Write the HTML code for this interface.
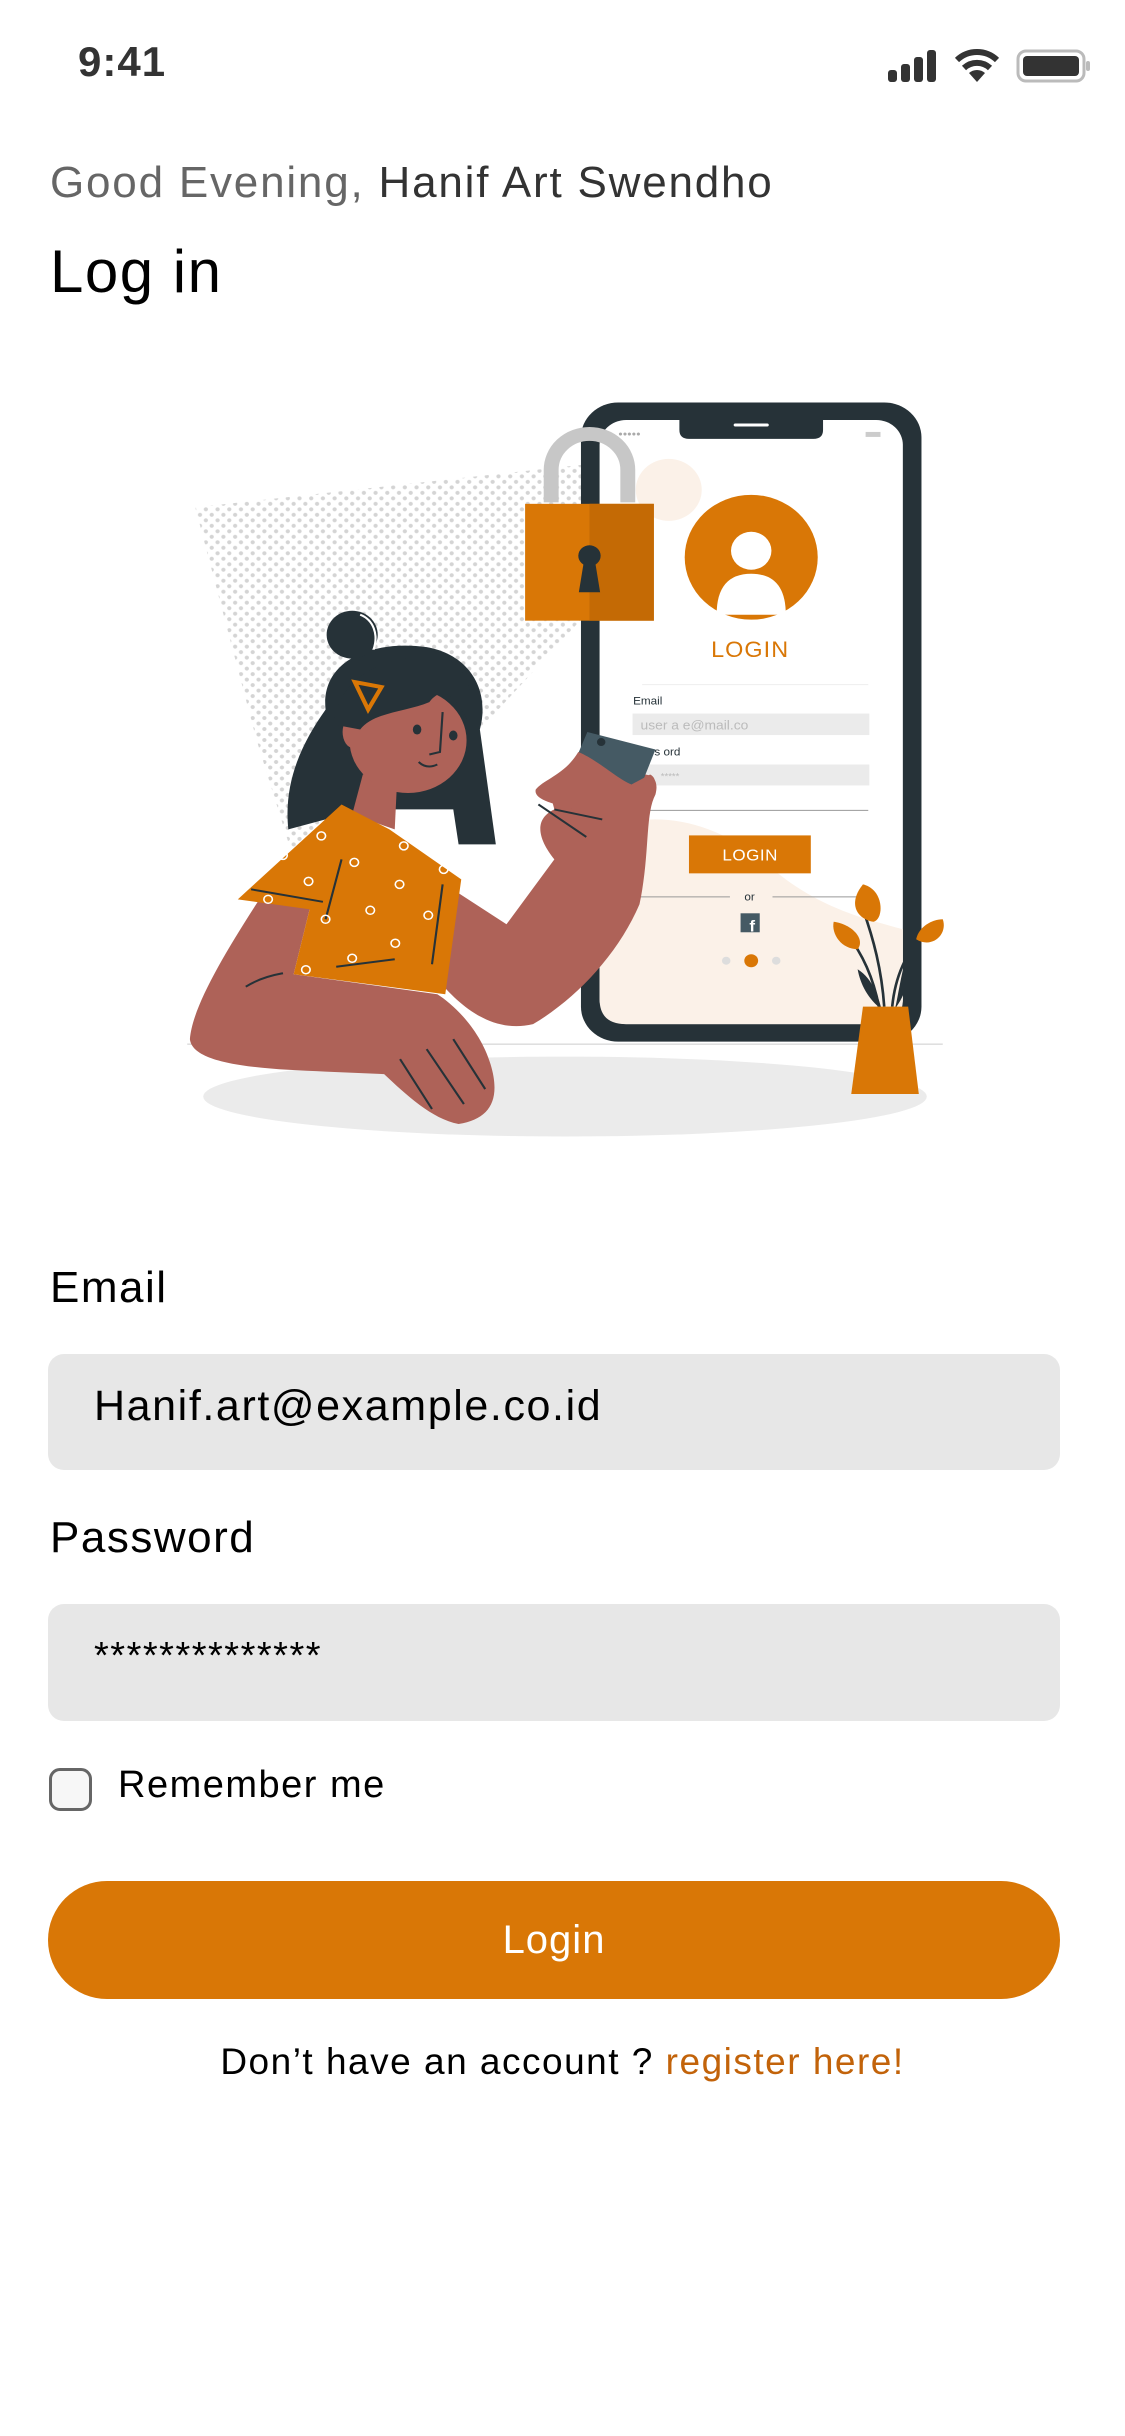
<!DOCTYPE html>
<html><head><meta charset="utf-8">
<style>
*{margin:0;padding:0;box-sizing:border-box}
body{width:1125px;height:2436px;background:#fff;position:relative;overflow:hidden;font-family:"Liberation Sans",sans-serif;color:#000}
.a{position:absolute;white-space:nowrap}
.inp{position:absolute;left:48px;width:1012px;background:#e7e7e7;border-radius:16px}
</style></head><body>
<div class="a" style="left:78px;top:38px;font-size:42px;font-weight:bold;color:#333;letter-spacing:1px">9:41</div>
<svg class="a" style="left:885px;top:48px" width="205" height="36" viewBox="0 0 205 36">
<rect x="3" y="22" width="9" height="12" rx="3" fill="#333"/><rect x="16" y="16" width="9" height="18" rx="3" fill="#333"/><rect x="29" y="9" width="9" height="25" rx="3" fill="#333"/><rect x="42" y="2" width="9" height="32" rx="3" fill="#333"/>
<path d="M92 34 L84 25 A12 12 0 0 1 100 25 Z" fill="#333"/>
<path d="M79 20 A19 19 0 0 1 105 20" stroke="#333" stroke-width="6" fill="none"/>
<path d="M72 12 A29 29 0 0 1 112 12" stroke="#333" stroke-width="6" fill="none"/>
<rect x="133" y="3" width="66" height="30" rx="8" fill="none" stroke="#bbb" stroke-width="3"/>
<rect x="138" y="8" width="56" height="20" rx="4" fill="#333"/>
<rect x="201" y="13" width="4" height="10" rx="2" fill="#bbb"/>
</svg>
<div class="a" style="left:50px;top:158px;font-size:44px;color:#666;letter-spacing:1.8px">Good Evening, <span style="color:#333">Hanif Art Swendho</span></div>
<div class="a" style="left:50px;top:237px;font-size:60px;color:#000;letter-spacing:1.5px">Log in</div>

<svg class="a" style="left:150px;top:380px" width="830" height="759" viewBox="0 0 1560 1520" preserveAspectRatio="none">
<defs><pattern id="dots" width="22" height="22" patternUnits="userSpaceOnUse"><circle cx="6" cy="6" r="4" fill="#d4d4d4"/><circle cx="17" cy="17" r="4" fill="#d4d4d4"/></pattern></defs>
<polygon points="85,255 810,170 810,480 620,700 270,960 200,720" fill="url(#dots)"/>
<ellipse cx="780" cy="1435" rx="680" ry="80" fill="#ebebeb"/>
<line x1="70" y1="1330" x2="1490" y2="1330" stroke="#ccc" stroke-width="2"/>
<rect x="810" y="45" width="640" height="1280" rx="70" fill="#263238"/>
<rect x="845" y="80" width="570" height="1210" rx="50" fill="#fff"/>
<path d="M845,900 C950,860 1050,880 1150,960 C1250,1060 1350,1080 1415,1100 L1415,1240 Q1415,1290 1365,1290 L895,1290 Q845,1290 845,1240 Z" fill="#fbf1e8"/>
<circle cx="975" cy="220" r="62" fill="#fbf1e8"/>
<path d="M995,75 H1265 V100 Q1265,118 1247,118 H1013 Q995,118 995,100 Z" fill="#263238"/>
<rect x="1097" y="87" width="66" height="6" rx="3" fill="#fff"/>
<text x="880" y="112" font-size="14" fill="#aaa">●●●●●</text>
<rect x="1345" y="104" width="28" height="10" fill="#ccc"/>
<circle cx="1130" cy="355" r="125" fill="#d97706"/>
<circle cx="1130" cy="342" r="38" fill="#fff"/>
<path d="M1065,470 Q1065,388 1130,388 Q1195,388 1195,470 Z" fill="#fff"/>
<text x="1128" y="555" font-size="44" fill="#d97706" text-anchor="middle" letter-spacing="2">LOGIN</text>
<line x1="925" y1="610" x2="1350" y2="610" stroke="#eee" stroke-width="2"/>
<text x="908" y="650" font-size="22" fill="#263238">Email</text>
<rect x="907" y="668" width="445" height="43" fill="#ebebeb"/>
<text x="922" y="700" font-size="26" fill="#bbb">user  a    e@mail.co</text>
<text x="948" y="752" font-size="22" fill="#263238">s  ord</text>
<rect x="907" y="770" width="445" height="42" fill="#ebebeb"/>
<text x="960" y="800" font-size="18" fill="#bbb">*****</text>
<line x1="925" y1="862" x2="1350" y2="862" stroke="#999" stroke-width="2"/>
<rect x="1013" y="912" width="229" height="76" fill="#d97706"/>
<text x="1128" y="962" font-size="32" fill="#fff" text-anchor="middle" letter-spacing="1">LOGIN</text>
<line x1="920" y1="1035" x2="1090" y2="1035" stroke="#999" stroke-width="2"/>
<line x1="1170" y1="1035" x2="1330" y2="1035" stroke="#999" stroke-width="2"/>
<text x="1127" y="1042" font-size="22" fill="#263238" text-anchor="middle">or</text>
<rect x="1110" y="1068" width="36" height="38" fill="#455a64"/>
<text x="1132" y="1104" font-size="32" font-weight="bold" fill="#fff" text-anchor="middle">f</text>
<circle cx="1083" cy="1163" r="8" fill="#ddd"/><circle cx="1130" cy="1163" r="13" fill="#d97706"/><circle cx="1177" cy="1163" r="8" fill="#ddd"/>
<path d="M754,245 V180 A72,72 0 0 1 898,180 V245" stroke="#c7c7c7" stroke-width="28" fill="none"/>
<rect x="705" y="248" width="242" height="234" fill="#d97706"/>
<rect x="826" y="248" width="121" height="234" fill="#c46a05"/>
<circle cx="826" cy="352" r="21" fill="#263238"/>
<polygon points="816,360 836,360 846,425 806,425" fill="#263238"/>
<path d="M1380,1255 C1375,1180 1360,1120 1340,1060" stroke="#263238" stroke-width="5" fill="none"/>
<path d="M1395,1255 C1400,1200 1420,1140 1460,1110" stroke="#263238" stroke-width="5" fill="none"/>
<path d="M1370,1255 C1360,1200 1340,1150 1310,1110" stroke="#263238" stroke-width="5" fill="none"/>
<path d="M1330,1180 C1360,1200 1370,1240 1375,1260 C1350,1240 1335,1210 1330,1180Z" fill="#263238"/>
<path d="M1420,1160 C1410,1200 1405,1240 1400,1260 C1420,1230 1430,1200 1420,1160Z" fill="#263238"/>
<path d="M1340,1010 C1380,1020 1380,1080 1360,1085 C1330,1080 1310,1050 1340,1010Z" fill="#d97706"/>
<path d="M1285,1085 C1320,1090 1345,1120 1330,1140 C1300,1140 1280,1110 1285,1085Z" fill="#d97706"/>
<path d="M1490,1080 C1500,1110 1470,1140 1440,1120 C1445,1095 1470,1080 1490,1080Z" fill="#d97706"/>
<polygon points="1340,1255 1425,1255 1445,1430 1318,1430" fill="#d97706"/>
<path d="M330,660 C320,560 420,520 520,535 C600,550 640,620 620,700 L650,930 L580,930 L570,860 L460,860 L330,880 L260,900 C250,800 290,720 330,660 Z" fill="#263238"/>
<circle cx="380" cy="510" r="48" fill="#263238"/>
<path d="M395,470 C420,480 430,510 420,540" stroke="#fff" stroke-width="4" fill="none"/>
<polygon points="400,790 465,790 460,900 380,870" fill="#ae6258"/>
<ellipse cx="485" cy="722" rx="110" ry="105" fill="#ae6258"/>
<ellipse cx="382" cy="705" rx="20" ry="32" fill="#ae6258"/>
<path d="M345,690 C355,580 470,540 560,560 C605,585 608,640 600,690 C575,630 550,610 525,645 C480,665 420,665 395,700 Z" fill="#263238"/>
<path d="M385,605 L435,615 L410,660 Z" fill="none" stroke="#d97706" stroke-width="8"/>
<ellipse cx="502" cy="700" rx="8" ry="10" fill="#263238"/><ellipse cx="570" cy="712" rx="8" ry="10" fill="#263238"/>
<path d="M550,665 L545,745 L525,750" stroke="#263238" stroke-width="4" fill="none"/>
<path d="M505,765 Q520,780 540,770" stroke="#263238" stroke-width="4" fill="none"/>
<path d="M230,1000 C150,1130 80,1250 75,1320 C80,1370 200,1380 330,1385 L440,1390 C480,1430 530,1480 580,1490 C640,1480 660,1440 640,1370 C620,1300 570,1250 540,1230 L270,1190 L300,1060 Z" fill="#ae6258"/>
<path d="M540,1000 L670,1090 L760,960 C730,920 720,880 760,860 L750,820 C770,800 820,780 850,770 L900,800 C930,780 960,790 950,830 C930,870 940,950 920,1050 C880,1150 800,1240 720,1290 C640,1310 580,1250 540,1200 Z" fill="#ae6258"/>
<polygon points="822,705 950,740 905,860 780,810" fill="#455a64"/>
<circle cx="848" cy="725" r="8" fill="#263238"/>
<path d="M805,745 C840,760 880,800 905,810 L940,790 C960,800 945,840 935,870 L800,860 C760,850 720,840 725,820 C740,800 780,790 805,745Z" fill="#ae6258"/>
<path d="M760,860 L850,880 M730,850 L820,915" stroke="#263238" stroke-width="4" fill="none"/>
<path d="M165,1040 L360,850 L450,900 L585,1000 L555,1230 L270,1190 L300,1060 Z" fill="#d97706"/>
<path d="M190,1020 L325,1045 M330,1080 L360,960 M530,1170 L550,1010 M350,1175 L460,1160" stroke="#263238" stroke-width="4" fill="none"/>
<g fill="none" stroke="#fff" stroke-width="3">
<circle cx="322" cy="913" r="8"/><circle cx="250" cy="952" r="8"/><circle cx="384" cy="966" r="8"/><circle cx="477" cy="933" r="8"/><circle cx="298" cy="1004" r="8"/><circle cx="469" cy="1010" r="8"/><circle cx="222" cy="1040" r="8"/><circle cx="414" cy="1062" r="8"/><circle cx="523" cy="1072" r="8"/><circle cx="330" cy="1080" r="8"/><circle cx="461" cy="1128" r="8"/><circle cx="380" cy="1158" r="8"/><circle cx="293" cy="1181" r="8"/><circle cx="552" cy="980" r="8"/>
</g>
<path d="M180,1215 C210,1195 240,1190 250,1188 M470,1360 L530,1460 M520,1340 L590,1450 M570,1320 L630,1420" stroke="#263238" stroke-width="4" fill="none"/>
</svg>

<div class="a" style="left:50px;top:1263px;font-size:44px;letter-spacing:1.5px">Email</div>
<div class="inp" style="top:1354px;height:116px"></div>
<div class="a" style="left:94px;top:1382px;font-size:43px;letter-spacing:1.6px">Hanif.art@example.co.id</div>
<div class="a" style="left:50px;top:1513px;font-size:44px;letter-spacing:1.5px">Password</div>
<div class="inp" style="top:1604px;height:117px"></div>
<div class="a" style="left:94px;top:1635px;font-size:38px;letter-spacing:1.5px">**************</div>
<div class="a" style="left:49px;top:1768px;width:43px;height:43px;border:3px solid #666;border-radius:11px;background:#f7f7f7"></div>
<div class="a" style="left:118px;top:1764px;font-size:38px;letter-spacing:1.5px">Remember me</div>
<div class="a" style="left:48px;top:1881px;width:1012px;height:118px;background:#d97706;border-radius:59px;color:#fff;font-size:40px;text-align:center;line-height:118px;letter-spacing:1px">Login</div>
<div class="a" style="left:0;width:1125px;top:2041px;font-size:37px;text-align:center;letter-spacing:1.5px">Don’t have an account ? <span style="color:#c2630a">register here!</span></div>
</body></html>
